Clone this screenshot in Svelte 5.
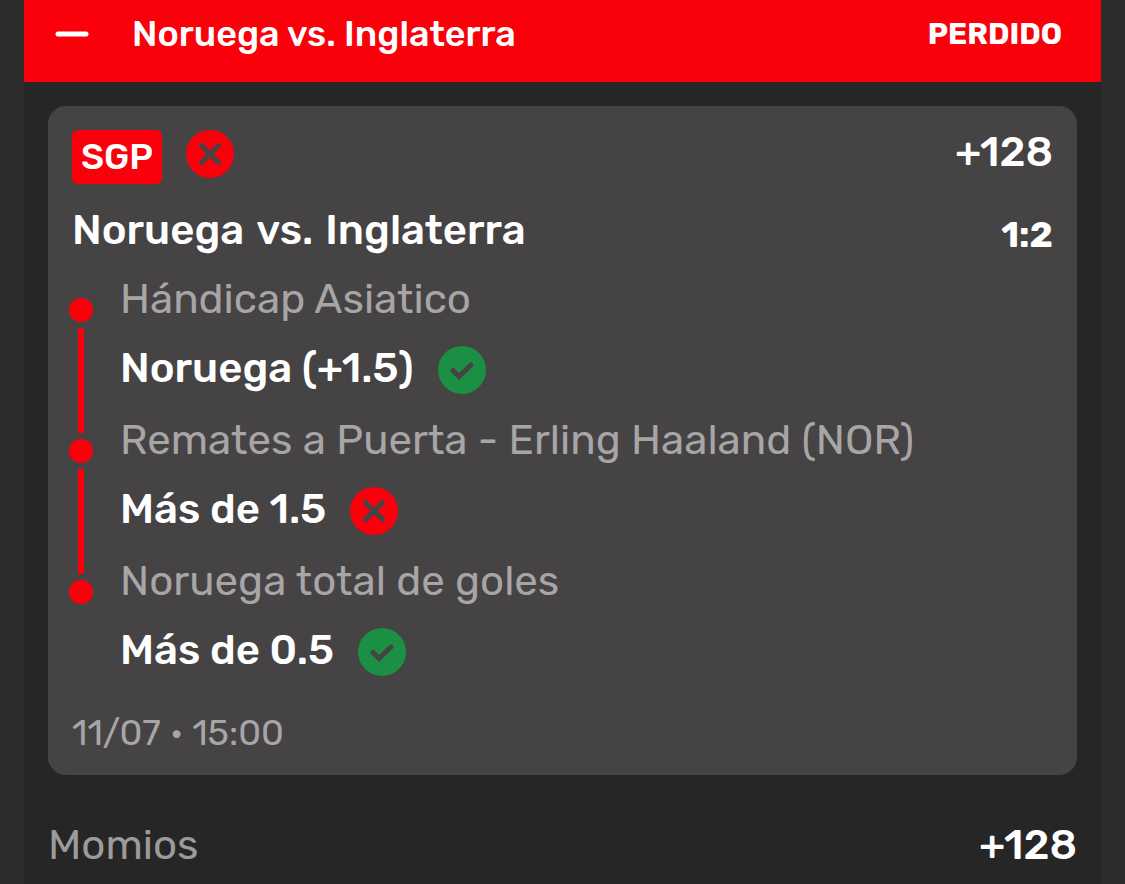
<script>
  const legs = [
    { market: 'Hándicap Asiatico', pick: 'Noruega (+1.5)', won: true },
    { market: 'Remates a Puerta - Erling Haaland (NOR)', pick: 'Más de 1.5', won: false },
    { market: 'Noruega total de goles', pick: 'Más de 0.5', won: true }
  ];
</script>

{#snippet mark(won)}
  <svg class="mark" viewBox="0 0 48 48" role="img" aria-label={won ? 'Ganado' : 'Perdido'}>
    <circle cx="24" cy="24" r="24" fill={won ? '#1b8f43' : '#fa000a'} />
    {#if won}
      <path d="M15 24.5l6 6L33 19" />
    {:else}
      <path d="M15.5 15.5l17 17M32.5 15.5l-17 17" />
    {/if}
  </svg>
{/snippet}

<main>
  <header>
    <button aria-label="Contraer">
      <svg viewBox="0 0 34 6"><path d="M3 3h28" /></svg>
    </button>
    <h1>Noruega vs. Inglaterra</h1>
    <strong>PERDIDO</strong>
  </header>

  <article>
    <div class="top">
      <span class="tag">SGP</span>
      {@render mark(false)}
      <span class="odds">+128</span>
    </div>
    <div class="match">
      <h2><span>Noruega</span> <span>vs.</span> <span>Inglaterra</span></h2>
      <span class="score">1:2</span>
    </div>
    <ul>
      {#each legs as leg, i}
        <li>
          <span class="rail">
            <i class="dot"></i>
            {#if i < legs.length - 1}<i class="line"></i>{/if}
          </span>
          <div>
            <p class="market">{leg.market}</p>
            <p class="pick">{leg.pick}{@render mark(leg.won)}</p>
          </div>
        </li>
      {/each}
    </ul>
    <time>11/07 • 15:00</time>
  </article>

  <footer>
    <span>Momios</span>
    <span class="odds">+128</span>
  </footer>
</main>

<style>
  :global(body) {
    margin: 0;
    background: #2c2c2c;
  }
  main {
    min-height: 100vh;
    box-sizing: border-box;
    margin: 0 24px;
    background: #262626;
    color: #fff;
    font-family: Rubik, Roboto, sans-serif;
    font-size: 42px;
    line-height: 44px;
    overflow: hidden;
  }
  h1, h2, p, ul {
    margin: 0;
    padding: 0;
  }
  header {
    display: flex;
    align-items: center;
    height: 82px;
    padding: 0 39px 14px 31px;
    box-sizing: border-box;
    background: #fa000a;
  }
  header button {
    display: flex;
    width: 77px;
    padding: 0;
    border: 0;
    background: none;
  }
  header svg {
    width: 34px;
    height: 6px;
    stroke: #fff;
    stroke-width: 5;
    stroke-linecap: round;
  }
  h1 {
    flex: 1;
    font-size: 36px;
    font-weight: 500;
  }
  header strong {
    font-size: 30px;
    font-weight: 700;
  }
  article {
    margin: 24px;
    padding: 24px;
    border-radius: 18px;
    background: #464344;
  }
  .top {
    display: flex;
    gap: 24px;
    height: 54px;
  }
  .tag {
    padding: 0 9px;
    border-radius: 6px;
    background: #fa000a;
    font-size: 36px;
    font-weight: 500;
    line-height: 54px;
  }
  .mark {
    flex: none;
    width: 48px;
    height: 48px;
  }
  .mark path {
    fill: none;
    stroke: #464344;
    stroke-width: 5;
    stroke-linecap: round;
  }
  .odds {
    margin-left: auto;
    font-weight: 500;
  }
  .match {
    display: flex;
    justify-content: space-between;
    padding: 24px 0 15px;
  }
  h2 {
    display: flex;
    gap: 12px;
    font-size: 42px;
    font-weight: 500;
  }
  .score {
    font-size: 36px;
    font-weight: 700;
    line-height: 54px;
  }
  ul {
    list-style: none;
  }
  li {
    display: flex;
    gap: 27px;
    height: 141px;
  }
  .rail {
    display: flex;
    flex-direction: column;
    align-items: center;
    width: 24px;
    margin-left: -3px;
    padding-top: 21px;
  }
  .dot {
    width: 24px;
    height: 24px;
    border-radius: 50%;
    background: #fa000a;
  }
  .line {
    flex: 1;
    width: 6px;
    margin: 6px 0 -15px;
    background: #fa000a;
  }
  .market {
    color: #a7a5a6;
  }
  .pick {
    display: flex;
    gap: 24px;
    padding-top: 25px;
    font-weight: 500;
  }
  time {
    display: block;
    margin-top: 15px;
    color: #a7a5a6;
    font-size: 36px;
    line-height: 36px;
  }
  footer {
    display: flex;
    padding: 24px;
    color: #9c9a9a;
  }
  footer .odds {
    color: #fff;
  }
</style>
